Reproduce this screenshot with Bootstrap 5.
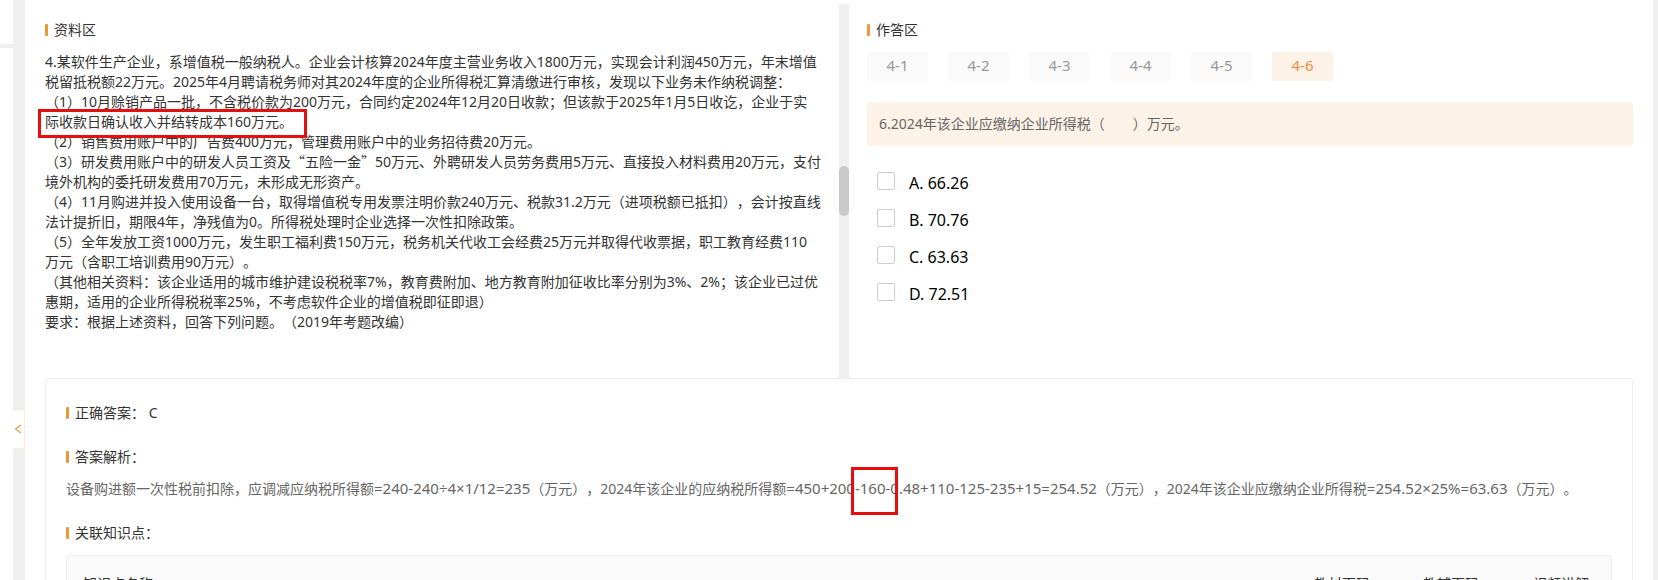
<!DOCTYPE html>
<html lang="zh-CN">
<head>
<meta charset="utf-8">
<meta name="viewport" content="width=device-width, initial-scale=1">
<title>答题解析</title>
<link href="https://cdn.jsdelivr.net/npm/bootstrap@5.3.0/dist/css/bootstrap.min.css" rel="stylesheet">
<style>
  body { font: 14px/20px "Noto Sans", "Noto Sans CJK SC", sans-serif; color: #333; background: #efefef; text-spacing-trim: space-all; font-feature-settings: "chws" 0, "halt" 0; }
  .side-strip { width: 13px; }
  .side-rule { height: 4px; background: #efefef; }
  .side-top { height: 44px; }
  .page-main { margin-left: 12px; margin-right: 5px; min-width: 0; }
  .cjk { font-family: "Noto Sans CJK SC", sans-serif; line-height: 1; }

  .fold-btn { top: 409px; left: 12px; width: 13px; height: 40px; border: 1px solid #fbe9da; border-left: 0; border-radius: 0 4px 4px 0; }

  .split { height: 374px; margin-top: 4px; }
  .pane-left { width: 50%; padding: 16px 12px 0 20px; }
  .pane-right { min-width: 0; padding: 16px 20px 0 18px; }
  .split-bar { width: 10px; background: #efefef; }
  .split-thumb { height: 50px; margin-top: 162px; border-radius: 5px; background: #c9c9c9; }

  .sec-title { display: flex; align-items: center; gap: 6px; margin: 0; font-size: 14px; font-weight: 400; line-height: 20px; }
  .sec-title::before { content: ""; width: 3px; height: 12px; border-radius: 1px; background: #f29536; }
  .material { margin-top: 12px; }

  .q-tabs { gap: 20px; margin-top: 12px; }
  .q-tab { width: 61px; height: 29px; padding: 0 0 4px; border: 0; border-radius: 2px; background: #fafafa; color: #999; font-size: 15px; }
  .q-tab.active { background: #fdf2e8; color: #f08b3c; }
  .q-stem { margin-top: 21px; padding: 12px; border-radius: 3px; background: #fdf2e8; color: #666; }
  .options { margin-top: 25px; padding-left: 10px; }
  .option { height: 37px; gap: 14px; }
  .option .form-check-input { width: 18px; height: 18px; margin: 1px 0 0; border: 1px solid #ccc; border-radius: 2px; }
  .option label { font-size: 16px; line-height: 24px; color: #000; }

  .answer-card { margin: 0 20px; padding: 24px 20px; border: 1px solid #eee; border-radius: 3px; }
  .analysis { color: #666; }
  .formula { font-size: 15px; line-height: 1; }
  .points-box { margin-top: 12px; border: 1px solid #eee; border-radius: 3px; background: #fafafa; }
  .points-box th { padding: 18px 16px; font-weight: 400; color: #333; }
  .points-box .col-page { width: 109px; }
  .points-box .col-video { width: 95px; padding-left: 0; padding-right: 22px; }

  .marked::after { content: ""; position: absolute; border: 3px solid #e60f0f; }
  .mark-line::after { inset: -3px -14px -7px -7px; }
  .mark-num::after { inset: -11px -8px -17px -4px; }
</style>
</head>
<body>
<div class="d-flex vh-100 overflow-hidden position-relative">
  <aside class="side-strip bg-white flex-shrink-0">
    <div class="side-top"></div>
    <div class="side-rule"></div>
  </aside>
  <button type="button" class="fold-btn position-absolute bg-white p-0 d-flex align-items-center justify-content-center" aria-label="收起">
    <svg width="8" height="10" viewBox="0 0 8 10" fill="none" stroke="#ee9650" stroke-width="1.2"><path d="M7 1 1.5 5 7 9"/></svg>
  </button>

  <main class="page-main bg-white flex-grow-1">
    <div class="split d-flex">
      <section class="pane-left flex-shrink-0">
        <h2 class="sec-title">资料区</h2>
        <div class="material">
          <p class="m-0">4.某软件生产企业，系增值税一般纳税人。企业会计核算2024年度主营业务收入1800万元，实现会计利润450万元，年末增值税留抵税额22万元。2025年4月聘请税务师对其2024年度的企业所得税汇算清缴进行审核，发现以下业务未作纳税调整：</p>
          <p class="m-0">（1）10月赊销产品一批，不含税价款为200万元，合同约定2024年12月20日收款；但该款于2025年1月5日收讫，企业于实<br><span class="marked mark-line position-relative">际收款日确认收入并结转成本160万元。</span></p>
          <p class="m-0">（2）销售费用账户中的广告费400万元，管理费用账户中的业务招待费20万元。</p>
          <p class="m-0">（3）研发费用账户中的研发人员工资及<span class="cjk">“五险一金”</span>50万元、外聘研发人员劳务费用5万元、直接投入材料费用20万元，支付境外机构的委托研发费用70万元，未形成无形资产。</p>
          <p class="m-0">（4）11月购进并投入使用设备一台，取得增值税专用发票注明价款240万元、税款31.2万元（进项税额已抵扣），会计按直线法计提折旧，期限4年，净残值为0。所得税处理时企业选择一次性扣除政策。</p>
          <p class="m-0">（5）全年发放工资1000万元，发生职工福利费150万元，税务机关代收工会经费25万元并取得代收票据，职工教育经费110<br>万元（含职工培训费用90万元）。</p>
          <p class="m-0">（其他相关资料：该企业适用的城市维护建设税税率7%，教育费附加、地方教育附加征收比率分别为3%、2%；该企业已过优惠期，适用的企业所得税税率25%，不考虑软件企业的增值税即征即退）</p>
          <p class="m-0">要求：根据上述资料，回答下列问题。（2019年考题改编）</p>
        </div>
      </section>
      <div class="split-bar flex-shrink-0"><div class="split-thumb"></div></div>
      <section class="pane-right flex-grow-1">
        <h2 class="sec-title">作答区</h2>
        <div class="q-tabs d-flex">
          <button type="button" class="q-tab">4-1</button>
          <button type="button" class="q-tab">4-2</button>
          <button type="button" class="q-tab">4-3</button>
          <button type="button" class="q-tab">4-4</button>
          <button type="button" class="q-tab">4-5</button>
          <button type="button" class="q-tab active">4-6</button>
        </div>
        <div class="q-stem">6.2024年该企业应缴纳企业所得税（　　）万元。</div>
        <div class="options">
          <div class="option d-flex"><input class="form-check-input" type="checkbox" id="optA"><label for="optA">A. 66.26</label></div>
          <div class="option d-flex"><input class="form-check-input" type="checkbox" id="optB"><label for="optB">B. 70.76</label></div>
          <div class="option d-flex"><input class="form-check-input" type="checkbox" id="optC"><label for="optC">C. 63.63</label></div>
          <div class="option d-flex"><input class="form-check-input" type="checkbox" id="optD"><label for="optD">D. 72.51</label></div>
        </div>
      </section>
    </div>

    <section class="answer-card">
      <h3 class="sec-title">正确答案： C</h3>
      <h3 class="sec-title mt-4">答案解析：</h3>
      <p class="analysis mt-2 pt-1 mb-4">设备购进额一次性税前扣除，应调减应纳税所得额<span class="formula">=240-240÷4×1/12=235</span>（万元），2024年该企业的应纳税所得额<span class="formula">=450+200<span class="marked mark-num position-relative">-160-</span>0.48+110-125-235+15=254.52</span>（万元），2024年该企业应缴纳企业所得税<span class="formula">=254.52×25%=63.63</span>（万元）。</p>
      <h3 class="sec-title">关联知识点：</h3>
      <div class="points-box">
        <table class="w-100">
          <thead><tr><th>知识点名称</th><th class="col-page">教材页码</th><th class="col-page">教辅页码</th><th class="col-video text-end">视频讲解</th></tr></thead>
        </table>
      </div>
    </section>
  </main>
</div>
<script src="https://cdn.jsdelivr.net/npm/bootstrap@5.3.0/dist/js/bootstrap.bundle.min.js"></script>
</body>
</html>
